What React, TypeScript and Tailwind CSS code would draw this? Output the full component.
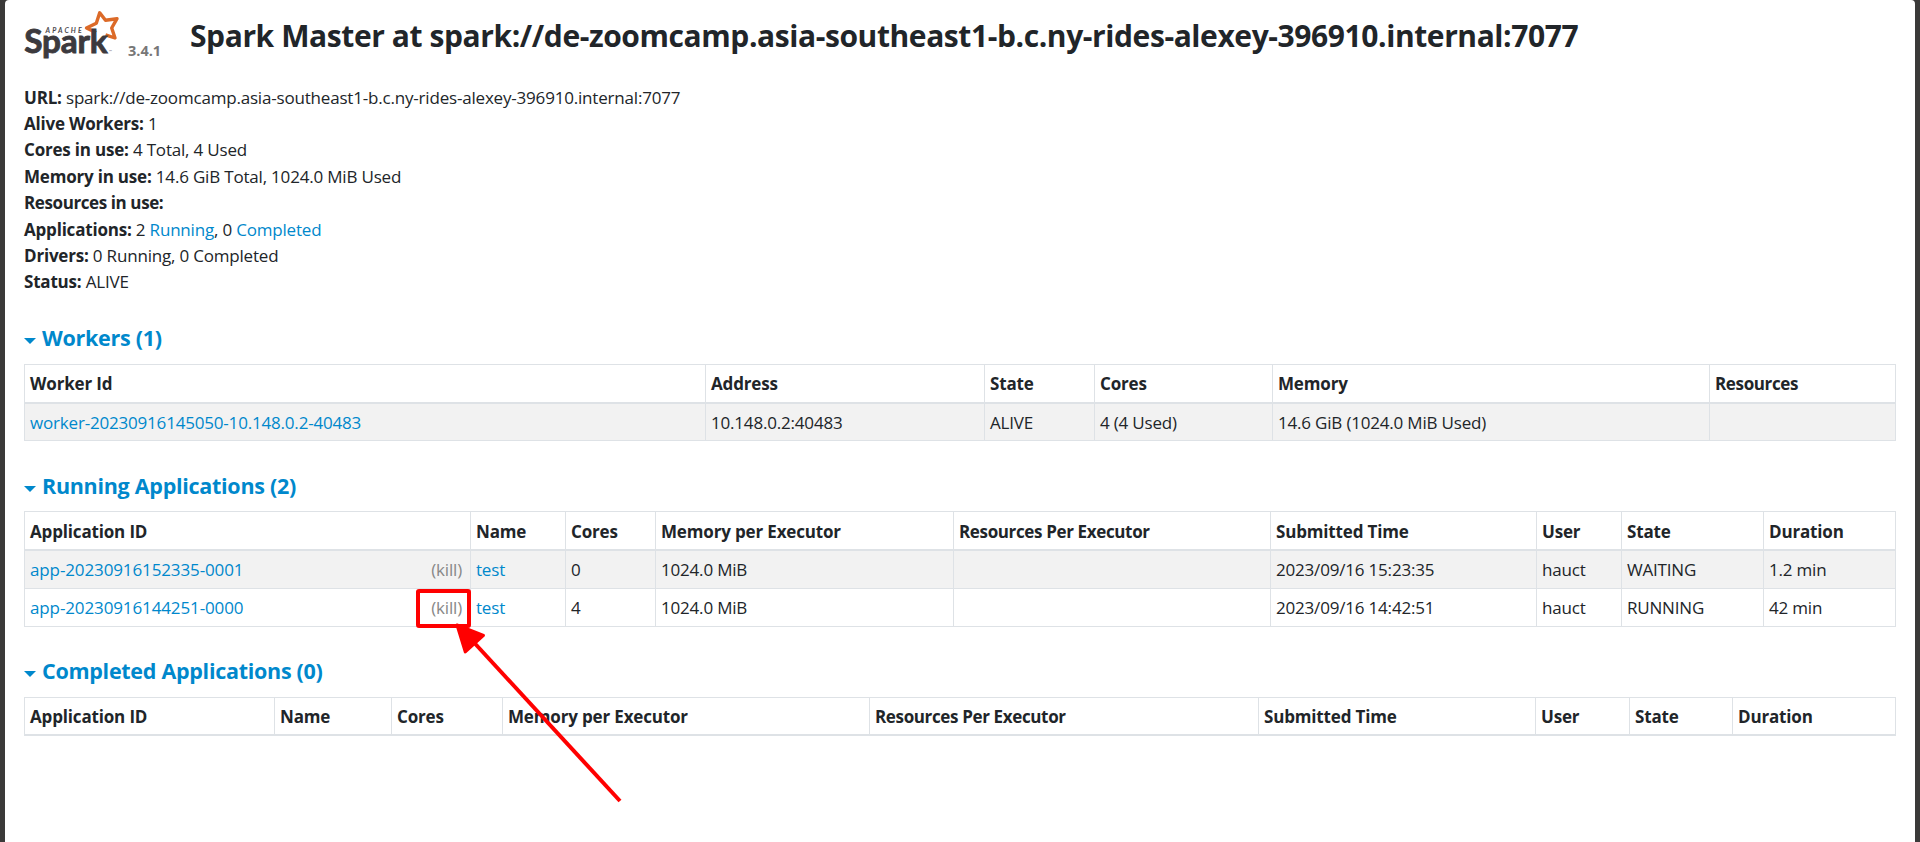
import type { ReactNode } from "react";

function SparkLogo() {
  return (
    <svg width="98" height="58" viewBox="0 0 98 58" className="block shrink-0" aria-label="Apache Spark">
      <path
        d="M72 27.5 L62.5 23 L72.3 18.3 L75.7 7.8 L81.5 15.3 L93 13.7 L87.7 23 L91 33 L81.5 29.8"
        fill="none"
        stroke="#dc6a28"
        strokeWidth="3.4"
        strokeLinejoin="round"
      />
      <g fontFamily="Lato, sans-serif" fill="#3c3a3e">
        <text x="21.5" y="28" fontSize="7" fontWeight="700" fontStyle="italic" textLength="36" fill="#4a484c">
          APACHE
        </text>
        <text
          x="0.3"
          y="48.3"
          fontSize="32"
          fontWeight="700"
          textLength="83"
          lengthAdjust="spacingAndGlyphs"
          stroke="#3c3a3e"
          strokeWidth="0.9"
        >
          Spark
        </text>
        <text x="86.5" y="48.3" fontSize="4" textAnchor="middle" fill="#777">
          ™
        </text>
      </g>
    </svg>
  );
}

function Link({ children }: { children: ReactNode }) {
  return (
    <a href="#" className="text-[#0088cc]">
      {children}
    </a>
  );
}

function Info({ label, children }: { label: string; children?: ReactNode }) {
  return (
    <li>
      <strong className={label.startsWith("Resources") ? "font-bold tracking-[-0.4px]" : "font-bold tracking-[-0.2px]"}>
        {label}
      </strong>{" "}
      {children}
    </li>
  );
}

function Heading({ children }: { children: ReactNode }) {
  return (
    <h4 className="flex h-[27px] items-center text-[21.5px] font-bold tracking-[-0.28px] text-[#0088cc]">
      <span className="mt-[5px] mr-[6px] h-0 w-0 border-x-[6px] border-t-[6px] border-x-transparent border-t-[#0088cc]" />
      {children}
    </h4>
  );
}

type TableProps = {
  cols: number[];
  head: string[];
  rows: ReactNode[][];
  headClass: string;
  cellClass: string;
  rowClass: string;
};

function DataTable({ cols, head, rows, headClass, cellClass, rowClass }: TableProps) {
  return (
    <table className="w-[1872px] table-fixed border-separate border-spacing-0 border-r border-[#dee2e6]">
      <colgroup>
        {cols.map((w, i) => (
          <col key={i} style={{ width: w }} />
        ))}
      </colgroup>
      <thead>
        <tr className={headClass}>
          {head.map((h) => (
            <th
              key={h}
              className={
                "border-t border-b-2 border-l border-[#dee2e6] p-0 pl-[5px] text-left align-middle font-bold whitespace-nowrap " +
                cellClass +
                (h.startsWith("Resources") ? " tracking-[-0.36px]" : " tracking-[-0.16px]")
              }
            >
              {h}
            </th>
          ))}
        </tr>
      </thead>
      <tbody>
        {rows.map((r, i) => (
          <tr key={i} className={rowClass + (i % 2 === 0 ? " bg-[#f2f2f2]" : "")}>
            {r.map((c, j) => (
              <td
                key={j}
                className="border-b border-l border-[#dee2e6] p-0 pt-[2px] pl-[5px] align-middle whitespace-nowrap"
              >
                {c}
              </td>
            ))}
          </tr>
        ))}
      </tbody>
    </table>
  );
}

function AppId({ id }: { id: string }) {
  return (
    <div className="flex justify-between pr-[8px]">
      <span className="tracking-[-0.12px]">
        <Link>{id}</Link>
      </span>
      <a href="#" className="text-[#888888]">
        (kill)
      </a>
    </div>
  );
}

const APP_HEAD = [
  "Application ID",
  "Name",
  "Cores",
  "Memory per Executor",
  "Resources Per Executor",
  "Submitted Time",
  "User",
  "State",
  "Duration",
];

const RUNNING: ReactNode[][] = [
  [<AppId id="app-20230916152335-0001" />, <Link>test</Link>, "0", "1024.0 MiB", "", "2023/09/16 15:23:35", "hauct", "WAITING", "1.2 min"],
  [<AppId id="app-20230916144251-0000" />, <Link>test</Link>, "4", "1024.0 MiB", "", "2023/09/16 14:42:51", "hauct", "RUNNING", "42 min"],
];

export default function App() {
  return (
    <div className="relative h-[842px] w-[1920px] overflow-hidden bg-[#3b3a39] px-[5px]">
      <main className="h-full rounded-t-[4px] bg-white pl-[19px] font-['Open_Sans',sans-serif] text-[17px] leading-[26.4px] tracking-[-0.19px] text-[#212529]">
        <header className="flex h-[84.5px] pt-[5px]">
          <div className="flex w-[166px]">
            <div className="w-[104px]">
              <SparkLogo />
            </div>
            <span className="mt-[34px] h-6 text-[14.5px] leading-[24px] font-bold tracking-[0px] text-[#777777]">3.4.1</span>
          </div>
          <h3 className="mt-[11px] h-10 text-[30px] leading-[40px] font-bold tracking-[-0.41px] whitespace-nowrap">
            Spark Master at spark://de-zoomcamp.asia-southeast1-b.c.ny-rides-alexey-396910.internal:7077
          </h3>
        </header>

        <ul className="h-[240.5px]">
          <Info label="URL:">spark://de-zoomcamp.asia-southeast1-b.c.ny-rides-alexey-396910.internal:7077</Info>
          <Info label="Alive Workers:">1</Info>
          <Info label="Cores in use:">4 Total, 4 Used</Info>
          <Info label="Memory in use:">14.6 GiB Total, 1024.0 MiB Used</Info>
          <Info label="Resources in use:" />
          <Info label="Applications:">
            2 <Link>Running</Link>, 0 <Link>Completed</Link>
          </Info>
          <Info label="Drivers:">0 Running, 0 Completed</Info>
          <Info label="Status:">ALIVE</Info>
        </ul>

        <section className="h-[148px]">
          <Heading>Workers (1)</Heading>
          <div className="pt-3">
            <DataTable
              cols={[681, 279, 110, 178, 437, 186]}
              head={["Worker Id", "Address", "State", "Cores", "Memory", "Resources"]}
              headClass="h-[40px]"
              cellClass="pt-[2px]"
              rowClass="h-[37px]"
              rows={[
                [
                  <Link>worker-20230916145050-10.148.0.2-40483</Link>,
                  "10.148.0.2:40483",
                  "ALIVE",
                  "4 (4 Used)",
                  "14.6 GiB (1024.0 MiB Used)",
                  "",
                ],
              ]}
            />
          </div>
        </section>

        <section className="h-[185px]">
          <Heading>Running Applications (2)</Heading>
          <div className="pt-[11px]">
            <DataTable
              cols={[446, 95, 90, 298, 317, 266, 85, 142, 132]}
              head={APP_HEAD}
              headClass="h-[40px]"
              cellClass="pt-[4px]"
              rowClass="h-[38px]"
              rows={RUNNING}
            />
          </div>
        </section>

        <section>
          <Heading>Completed Applications (0)</Heading>
          <div className="pt-3">
            <DataTable
              cols={[250, 117, 111, 367, 389, 277, 94, 103, 163]}
              head={APP_HEAD}
              headClass="h-[39px]"
              cellClass="pt-[2px]"
              rowClass="h-[38px]"
              rows={[]}
            />
          </div>
        </section>
      </main>

      <svg className="pointer-events-none absolute top-[580px] left-[410px]" width="220" height="230" viewBox="410 580 220 230">
        <rect x="418" y="591" width="51" height="35" rx="1" fill="none" stroke="#ff0000" strokeWidth="4" />
        <path d="M474 642.5 L620 801" stroke="#ff0000" strokeWidth="4" />
        <path d="M457 625 L483.5 635.5 L465.3 652 Z" fill="#ff0000" stroke="#ff0000" strokeWidth="3" strokeLinejoin="round" />
      </svg>
    </div>
  );
}
